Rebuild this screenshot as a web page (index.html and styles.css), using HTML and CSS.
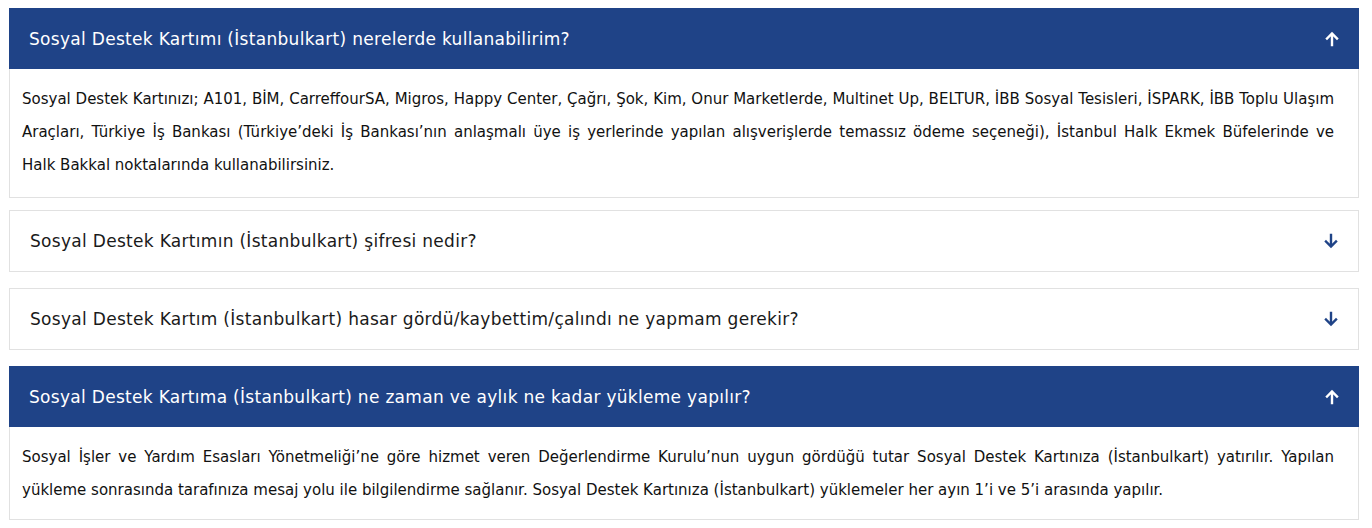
FILE: index.html
```html
<!DOCTYPE html>
<html lang="tr">
<head>
<meta charset="utf-8">
<link rel="stylesheet" href="styles.css">
</head>
<body>
<div class="faq">
  <div class="item open first">
    <div class="head">
      <span class="q">Sosyal Destek Kartımı (İstanbulkart) nerelerde kullanabilirim?</span>
      <svg class="arrow" viewBox="0 0 16 16" width="16" height="16"><path d="M8 14V3M3 7.5L8 2.5l5 5" fill="none" stroke="currentColor" stroke-width="2.4" stroke-linecap="square"/></svg>
    </div>
    <div class="body">Sosyal Destek Kartınızı; A101, BİM, CarreffourSA, Migros, Happy Center, Çağrı, Şok, Kim, Onur Marketlerde, Multinet Up, BELTUR, İBB Sosyal Tesisleri, İSPARK, İBB Toplu Ulaşım Araçları, Türkiye İş Bankası (Türkiye’deki İş Bankası’nın anlaşmalı üye iş yerlerinde yapılan alışverişlerde temassız ödeme seçeneği), İstanbul Halk Ekmek Büfelerinde ve <span class="nowrap">Halk Bakkal</span> noktalarında kullanabilirsiniz.</div>
  </div>
  <div class="item">
    <div class="head">
      <span class="q">Sosyal Destek Kartımın (İstanbulkart) şifresi nedir?</span>
      <svg class="arrow" viewBox="0 0 16 16" width="16" height="16"><path d="M8 2v11M3 8.5l5 5 5-5" fill="none" stroke="currentColor" stroke-width="2.4" stroke-linecap="square"/></svg>
    </div>
  </div>
  <div class="item">
    <div class="head">
      <span class="q">Sosyal Destek Kartım (İstanbulkart) hasar gördü/kaybettim/çalındı ne yapmam gerekir?</span>
      <svg class="arrow" viewBox="0 0 16 16" width="16" height="16"><path d="M8 2v11M3 8.5l5 5 5-5" fill="none" stroke="currentColor" stroke-width="2.4" stroke-linecap="square"/></svg>
    </div>
  </div>
  <div class="item open">
    <div class="head">
      <span class="q">Sosyal Destek Kartıma (İstanbulkart) ne zaman ve aylık ne kadar yükleme yapılır?</span>
      <svg class="arrow" viewBox="0 0 16 16" width="16" height="16"><path d="M8 14V3M3 7.5L8 2.5l5 5" fill="none" stroke="currentColor" stroke-width="2.4" stroke-linecap="square"/></svg>
    </div>
    <div class="body">Sosyal İşler ve Yardım Esasları Yönetmeliği’ne göre hizmet veren Değerlendirme Kurulu’nun uygun gördüğü tutar Sosyal Destek Kartınıza (İstanbulkart) yatırılır. Yapılan yükleme sonrasında tarafınıza mesaj yolu ile bilgilendirme sağlanır. Sosyal Destek Kartınıza (İstanbulkart) yüklemeler her ayın 1’i ve 5’i arasında yapılır.</div>
  </div>
</div>
</body>
</html>
```

FILE: styles.css
```css
* { box-sizing: border-box; }
html, body { margin: 0; padding: 0; background: #fff; }
body {
  padding: 8px 13px 0 9px;
  font-family: "DejaVu Sans", "Open Sans", sans-serif;
  color: #111;
}
.faq { display: flex; flex-direction: column; }
.item {
  border: 1px solid #e1e1e1;
  background: #fff;
  margin-bottom: 16px;
}
.item.first { margin-bottom: 12px; }
.head {
  height: 60px;
  display: flex;
  align-items: center;
  justify-content: space-between;
  padding: 0 19px 0 20px;
  font-size: 17px;
  letter-spacing: 0.3px;
  color: #1a1a1a;
}
.item.open .head {
  background: #1f4387;
  color: #fff;
  margin: -1px -1px 0 -1px;
  height: 61px;
  padding-top: 1px;
}
.arrow { color: #1f4387; flex: none; }
.item.open .arrow { color: #fff; }
.body {
  padding: 14px 24px 12px 12px;
  font-size: 15px;
  line-height: 33px;
  text-align: justify;
  color: #111;
}
.item.first .body { padding-bottom: 15px; }
.nowrap { white-space: nowrap; }
```
